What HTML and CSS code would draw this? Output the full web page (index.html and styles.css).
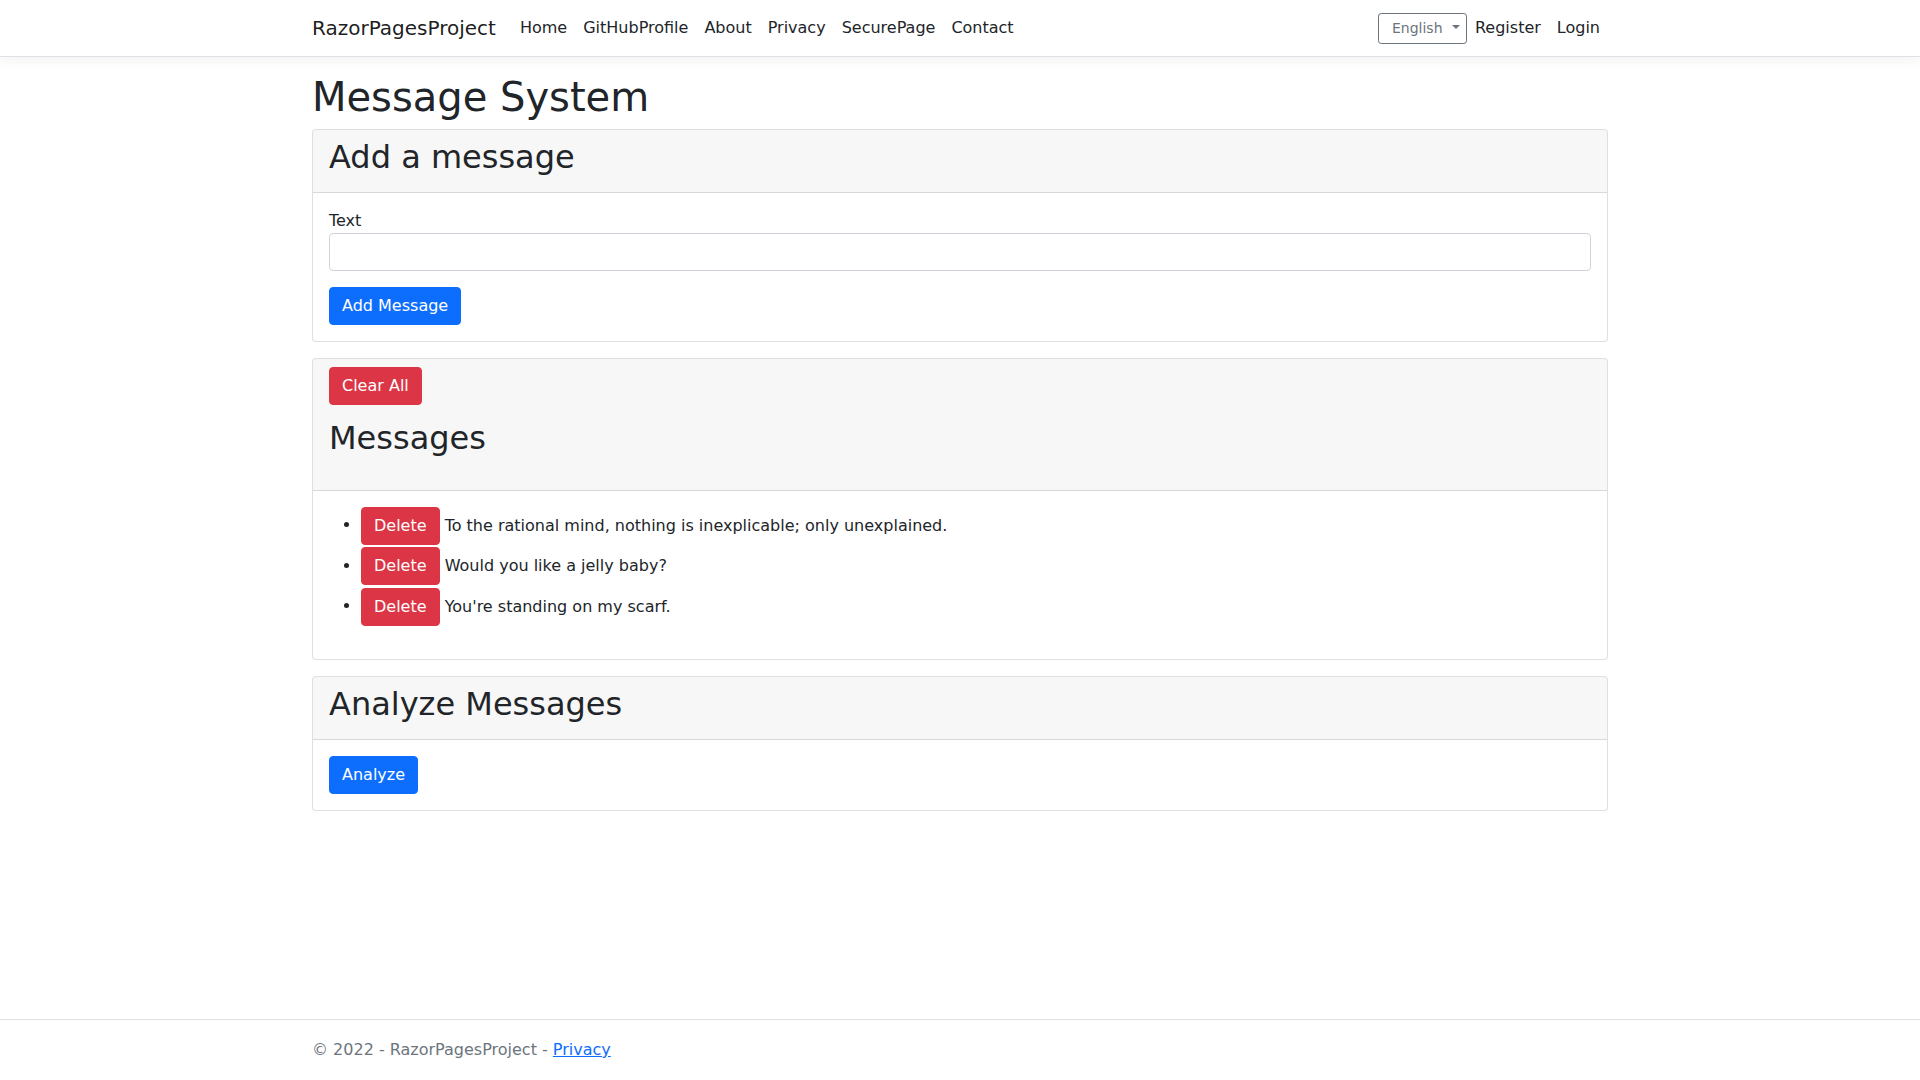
FILE: index.html
```html
<!DOCTYPE html>
<html lang="en">
<head>
<meta charset="utf-8">
<title>Message System - RazorPagesProject</title>
<link rel="stylesheet" href="styles.css">
</head>
<body>
<header class="navbar">
  <div class="container nav-inner">
    <a class="brand" href="#">RazorPagesProject</a>
    <ul class="nav-links">
      <li><a class="nav-link" href="#">Home</a></li>
      <li><a class="nav-link" href="#">GitHubProfile</a></li>
      <li><a class="nav-link" href="#">About</a></li>
      <li><a class="nav-link" href="#">Privacy</a></li>
      <li><a class="nav-link" href="#">SecurePage</a></li>
      <li><a class="nav-link" href="#">Contact</a></li>
    </ul>
    <div class="nav-right">
      <button class="btn-lang" type="button">English<span class="caret"></span></button>
      <a class="nav-link" href="#">Register</a>
      <a class="nav-link" href="#">Login</a>
    </div>
  </div>
</header>

<main class="container main">
  <h1 class="page-title">Message System</h1>

  <section class="card">
    <div class="card-header">
      <h2 class="card-title">Add a message</h2>
    </div>
    <div class="card-body">
      <form class="add-form">
        <div class="form-group">
          <label class="label" for="text">Text</label>
          <input class="form-control" id="text" type="text">
        </div>
        <button class="btn btn-primary" type="button">Add Message</button>
      </form>
    </div>
  </section>

  <section class="card">
    <div class="card-header">
      <button class="btn btn-danger" type="button">Clear All</button>
      <h2 class="card-title messages-title">Messages</h2>
    </div>
    <div class="card-body">
      <ul class="message-list">
        <li><button class="btn btn-danger" type="button">Delete</button> To the rational mind, nothing is inexplicable; only unexplained.</li>
        <li><button class="btn btn-danger" type="button">Delete</button> Would you like a jelly baby?</li>
        <li><button class="btn btn-danger" type="button">Delete</button> You're standing on my scarf.</li>
      </ul>
    </div>
  </section>

  <section class="card">
    <div class="card-header">
      <h2 class="card-title">Analyze Messages</h2>
    </div>
    <div class="card-body">
      <button class="btn btn-primary" type="button">Analyze</button>
    </div>
  </section>
</main>

<footer class="footer">
  <div class="container">&copy; 2022 - RazorPagesProject - <a href="#" class="footer-link">Privacy</a></div>
</footer>
</body>
</html>
```

FILE: styles.css
```css
* { box-sizing: border-box; }

html, body { margin: 0; padding: 0; }

body {
  font-family: "DejaVu Sans", sans-serif;
  font-size: 16px;
  line-height: 1.5;
  color: #212529;
  background: #fff;
  min-height: 100vh;
  display: flex;
  flex-direction: column;
}

.container {
  width: 100%;
  max-width: 1320px;
  margin: 0 auto;
  padding: 0 12px;
}

/* Navbar */
.navbar {
  background: #fff;
  border-bottom: 1px solid #dee2e6;
  box-shadow: 0 4px 12px rgba(0,0,0,.05);
  padding: 8px 0;
  margin-bottom: 16px;
}

.nav-inner {
  display: flex;
  align-items: center;
}

.brand {
  font-size: 20px;
  line-height: 30px;
  padding: 5px 0;
  margin-right: 16px;
  color: rgba(0,0,0,.9);
  text-decoration: none;
}

.nav-links {
  list-style: none;
  margin: 0;
  padding: 0;
  display: flex;
  flex-grow: 1;
}

.nav-link {
  display: block;
  padding: 8px;
  color: #212529;
  text-decoration: none;
  line-height: 24px;
}

.nav-right {
  display: flex;
  align-items: center;
}

.btn-lang {
  font-family: inherit;
  font-size: 14px;
  line-height: 21px;
  height: 31px;
  width: 89px;
  padding: 4px 8px 4px 13px;
  margin-right: 0;
  border: 1px solid #6c757d;
  border-radius: 3.2px;
  background: #fff;
  color: #6c757d;
  display: inline-flex;
  align-items: center;
}

.caret {
  display: inline-block;
  margin-left: 9px;
  width: 0;
  height: 0;
  border-top: 4.5px solid #6c757d;
  border-left: 4.5px solid transparent;
  border-right: 4.5px solid transparent;
  position: relative;
  top: -1px;
}

/* Main */
.main {
  flex: 1 0 auto;
  padding-bottom: 16px;
}

.page-title {
  font-size: 40px;
  font-weight: 500;
  line-height: 1.2;
  margin: 0 0 8px;
}

.card {
  border: 1px solid rgba(0,0,0,.125);
  border-radius: 4px;
  margin-bottom: 16px;
  background: #fff;
  overflow: hidden;
}

.card-header {
  background: rgba(0,0,0,.03);
  border-bottom: 1px solid rgba(0,0,0,.125);
  padding: 8px 16px;
}

.card-title {
  font-size: 32px;
  font-weight: 500;
  line-height: 1.2;
  margin: 0 0 8px;
}

.messages-title {
  margin-top: 14px;
  margin-bottom: 24px;
}

.card-body {
  padding: 16px;
}

.form-group {
  margin-bottom: 16px;
}

.label {
  display: inline-block;
}

.form-control {
  display: block;
  width: 100%;
  height: 38px;
  padding: 6px 12px;
  font-family: inherit;
  font-size: 16px;
  border: 1px solid #ced4da;
  border-radius: 4px;
  background: #fff;
}

.btn {
  display: inline-block;
  font-family: inherit;
  font-size: 16px;
  line-height: 24px;
  padding: 6px 12px;
  border: 1px solid transparent;
  border-radius: 4px;
  color: #fff;
  vertical-align: middle;
  cursor: pointer;
}

.btn-primary {
  background: #0d6efd;
  border-color: #0d6efd;
}

.btn-danger {
  background: #dc3545;
  border-color: #dc3545;
}

.message-list {
  margin: 0 0 16px;
  padding-left: 32px;
}

.message-list li {
  padding-bottom: 2.5px;
}

.message-list li:last-child {
  padding-bottom: 1px;
}

/* Footer */
.footer {
  border-top: 1px solid #dee2e6;
  line-height: 60px;
  color: #6c757d;
  white-space: nowrap;
}

.footer-link {
  color: #0d6efd;
  text-decoration: underline;
}
```
